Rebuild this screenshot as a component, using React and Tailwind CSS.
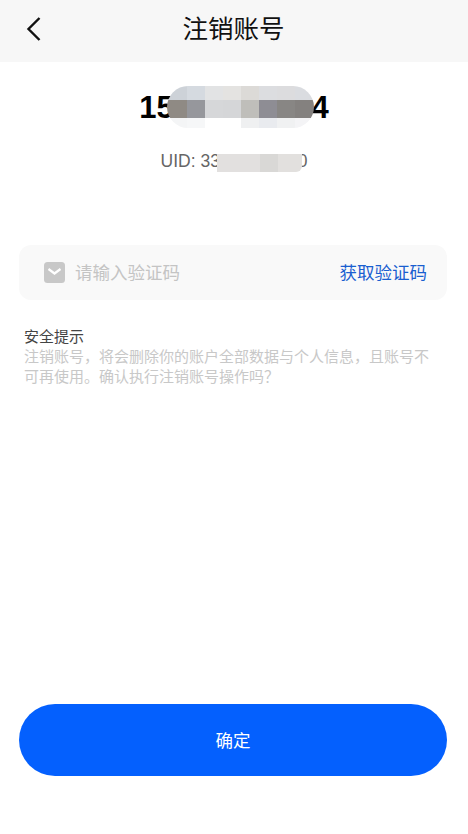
import React from 'react';

const font = { fontFamily: '"Liberation Sans", "Noto Sans CJK SC", sans-serif' };

// colours of the mosaic that hides the phone number, row by row
const phoneMosaic = [
  '#cdd2d8', '#d5dae0', '#e2e3e4', '#e4e3e1', '#dcdad7', '#dcdde0', '#dcdcde', '#dadce0',
  '#8f8a84', '#96979c', '#d6d7d9', '#d5d6d8', '#bfbeba', '#8e8d94', '#888684', '#84817f',
  '#f4f5f6', '#f6f7f8', '#ffffff', '#ffffff', '#eff0f1', '#e9ebef', '#f0f1f2', '#f4f4f6',
];

const uidMosaic = ['#e2e0df', '#d9d8d6', '#e2e0de'];

function BackIcon() {
  return (
    <svg width="18" height="26" viewBox="0 0 18 26" fill="none" stroke="#111" strokeWidth="2.4">
      <path d="M14.5 2 L3.5 13 L14.5 24" />
    </svg>
  );
}

function MailIcon() {
  return (
    <svg width="21" height="21" viewBox="0 0 21 21">
      <rect width="21" height="21" rx="3.5" fill="#c8c8c8" />
      <path d="M4.5 7 L10.5 11.5 L16.5 7" fill="none" stroke="#fff" strokeWidth="2.2" />
    </svg>
  );
}

export default function App() {
  return (
    <div style={font} className="flex flex-col w-[468px] h-[834px] bg-white">
      <div className="relative flex items-center justify-center h-[62px] bg-[#f7f7f7]">
        <div className="absolute left-[25px] top-[16px]">
          <BackIcon />
        </div>
        <h1 className="text-[25.5px] font-normal text-[#111] -mt-[4px] -ml-[1px]">注销账号</h1>
      </div>

      <div className="flex justify-center mt-[24px] h-[42px]">
        <div className="relative flex items-center text-[31px] font-bold text-black leading-none">
          15800000004
          <div className="absolute left-[28px] top-0 h-[42px] rounded-[21px] overflow-hidden grid grid-cols-[20px_repeat(6,18px)_19px] grid-rows-[14px_18px_10px]">
            {phoneMosaic.map((c, i) => (
              <div key={i} style={{ backgroundColor: c }} />
            ))}
          </div>
        </div>
      </div>

      <div className="flex justify-center mt-[23px]">
        <div className="relative text-[17.5px] leading-[20px] text-[#666]">
          UID: 33000000000
          <div className="absolute left-[56px] top-[1px] h-[20px] grid grid-cols-[43px_18px_24px] overflow-hidden border-t-[2px] border-white rounded-br-[6px]">
            {uidMosaic.map((c, i) => (
              <div key={i} style={{ backgroundColor: c }} />
            ))}
          </div>
        </div>
      </div>

      <div className="flex items-center h-[55px] ml-[19px] mr-[21px] mt-[74px] pl-[25px] pr-[20px] rounded-[12px] bg-[#f9f9f9]">
        <MailIcon />
        <span className="ml-[10px] pt-[1px] text-[17.5px] text-[#c4c4c4]">请输入验证码</span>
        <span className="ml-auto pt-[1px] text-[17.5px] text-[#1a5fd0]">获取验证码</span>
      </div>

      <div className="ml-[24px] mr-[34px] mt-[27px] text-[15px] leading-[20px]">
        <div className="text-[#444]">安全提示</div>
        <div className="text-[#c8c8c8]">注销账号，将会删除你的账户全部数据与个人信息，且账号不可再使用。确认执行注销账号操作吗？</div>
      </div>

      <button className="mt-auto mb-[58px] ml-[19px] mr-[21px] h-[72px] pt-[3px] rounded-[36px] bg-[#0460fe] text-white text-[17.5px]">
        确定
      </button>
    </div>
  );
}
